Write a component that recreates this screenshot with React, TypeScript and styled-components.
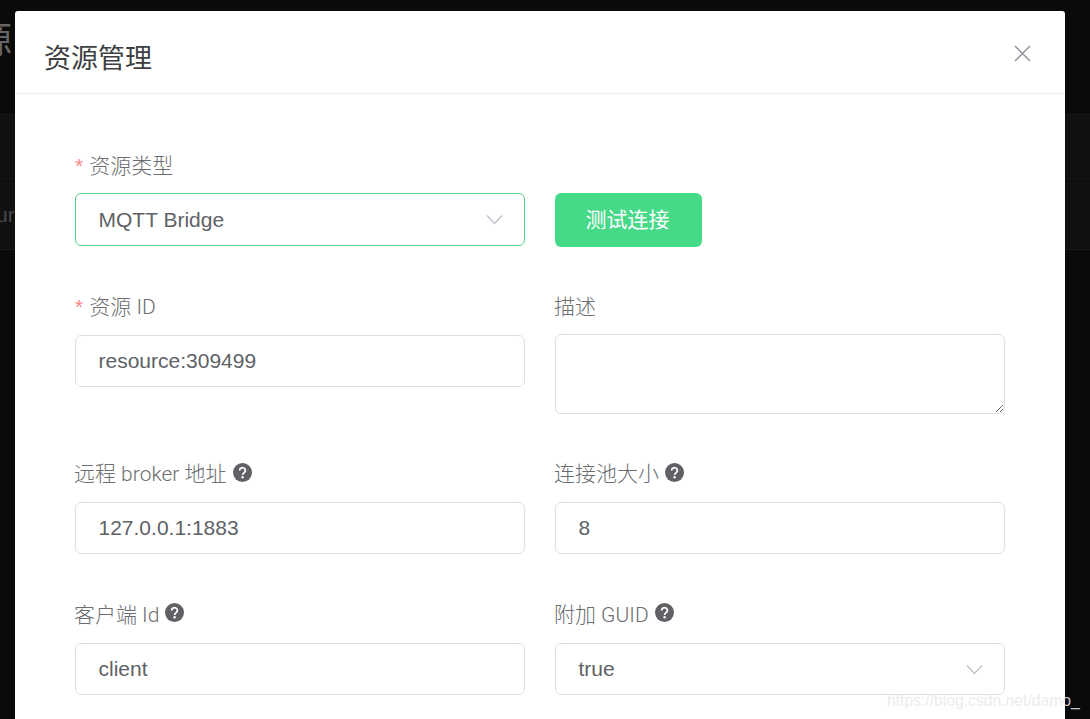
import React from 'react'
import styled, { createGlobalStyle } from 'styled-components'

const GlobalStyle = createGlobalStyle`
  html, body {
    margin: 0;
    height: 100%;
    background: #0a0a0a;
    overflow: hidden;
  }
  * {
    box-sizing: border-box;
  }
`

const FONT = `"Liberation Sans", "Noto Sans CJK SC", sans-serif`
const LABEL_FONT = `Roboto, "Noto Sans CJK SC", sans-serif`

const Page = styled.div`
  width: 1090px;
  height: 719px;
  position: relative;
  overflow: hidden;
  font-family: ${FONT};
`

const BackHeader = styled.div`
  height: 115px;
  padding-top: 16px;
  border-bottom: 1px solid #1a1a1a;
  font-size: 36px;
  line-height: 50px;
  color: #666;
  white-space: nowrap;
  margin-left: -60px;
`

const BackRow = styled.div<{ $height: number; $line: string }>`
  height: ${(p) => p.$height}px;
  background: #111;
  border-bottom: 1px solid ${(p) => p.$line};
  font-size: 21px;
  line-height: ${(p) => p.$height - 3}px;
  color: #46484c;
  white-space: nowrap;
`

const BackText = styled.span`
  display: inline-block;
  margin-left: -53px;
`

const Modal = styled.div`
  position: absolute;
  top: 11px;
  left: 15px;
  width: 1050px;
  height: 720px;
  background: #fff;
  border-radius: 3px 3px 0 0;
`

const ModalHeader = styled.div`
  height: 83px;
  padding: 5px 29px 0;
  border-bottom: 1px solid #ebeef5;
  display: flex;
  align-items: center;
  justify-content: space-between;
`

const ModalTitle = styled.span`
  margin-top: 4px;
  font-size: 27px;
  color: #3d3f42;
`

const CloseButton = styled.button`
  border: 0;
  padding: 0;
  margin-right: 5px;
  margin-top: -3px;
  background: none;
  display: flex;
  color: #909399;
`

const Form = styled.form`
  padding: 45px 60px 0;
  display: grid;
  grid-template-columns: 450px 450px;
  column-gap: 30px;
  row-gap: 33px;
`

const Field = styled.div`
  display: flex;
  flex-direction: column;
  align-items: flex-start;
`

const Label = styled.label<{ $height?: number; $required?: boolean }>`
  height: ${(p) => p.$height ?? 54}px;
  margin-left: ${(p) => (p.$required ? 0 : -1)}px;
  padding-bottom: 5px;
  display: flex;
  align-items: center;
  gap: 6px;
  font-family: ${LABEL_FONT};
  font-size: 21px;
  font-weight: 300;
  color: #6b6d71;
`

const Star = styled.span`
  margin-right: 1px;
  color: #f98a8a;
  font-family: ${FONT};
`

const HelpIcon = styled.svg`
  width: 19px;
  height: 19px;
  color: #5f6165;
`

const Input = styled.input`
  width: 450px;
  height: 52px;
  padding: 0 22px 0 22.5px;
  border: 1px solid #dcdfe6;
  border-radius: 6px;
  outline: none;
  font-family: ${FONT};
  font-size: 21px;
  color: #606266;
  background: #fff;
`

const TextArea = styled.textarea`
  width: 450px;
  height: 80px;
  padding: 8px 23px;
  border: 1px solid #dcdfe6;
  border-radius: 6px;
  outline: none;
  font-family: ${FONT};
  font-size: 21px;
  color: #606266;
  background: #fff;
`

const SelectRow = styled.div`
  display: flex;
  align-items: flex-start;
  gap: 30px;
`

const Select = styled.div<{ $focused?: boolean }>`
  width: 450px;
  height: ${(p) => (p.$focused ? 53 : 52)}px;
  padding: 0 21px 0 22.5px;
  border: 1px solid ${(p) => (p.$focused ? '#5bd08f' : '#dcdfe6')};
  border-radius: 6px;
  display: flex;
  align-items: center;
  justify-content: space-between;
  font-size: 21px;
  color: #606266;
`

const Chevron = styled.svg`
  width: 17px;
  height: 11px;
  color: #c0c4cc;
`

const TestButton = styled.button`
  width: 147px;
  height: 54px;
  padding: 0 2px 4px 0;
  border: 0;
  border-radius: 6px;
  background: #46da88;
  color: #fff;
  font-family: ${FONT};
  font-size: 21px;
`

const FullRow = styled.div`
  grid-column: 1 / -1;
`

const Watermark = styled.div`
  position: absolute;
  left: 887px;
  top: 691px;
  font-size: 15.7px;
  line-height: 20px;
  color: rgba(232, 232, 232, 0.86);
  white-space: nowrap;
`

const Arrow = () => (
  <Chevron viewBox="0 0 17 11" fill="none" stroke="currentColor" strokeWidth="1.5">
    <path d="M1 1.5 L8.5 9.5 L16 1.5" />
  </Chevron>
)

const Help = () => (
  <HelpIcon viewBox="0 0 19 19">
    <circle cx="9.5" cy="9.5" r="9.5" fill="currentColor" />
    <path
      d="M6.6 7.4 a2.9 2.7 0 1 1 4.6 2.2 c-1 .7 -1.6 1.1 -1.6 2.3"
      fill="none"
      stroke="#fff"
      strokeWidth="1.8"
    />
    <circle cx="9.6" cy="14.3" r="1.2" fill="#fff" />
  </HelpIcon>
)

export default function App() {
  return (
    <Page>
      <GlobalStyle />
      <BackHeader>资源</BackHeader>
      <BackRow $height={67} $line="#0b0b0b" />
      <BackRow $height={68} $line="#1a1a1a">
        <BackText>Resource</BackText>
      </BackRow>
      <Modal>
        <ModalHeader>
          <ModalTitle>资源管理</ModalTitle>
          <CloseButton type="button" aria-label="关闭">
            <svg width="17" height="17" viewBox="0 0 17 17" stroke="currentColor" strokeWidth="1.5" fill="none">
              <path d="M1 1 L16 16 M16 1 L1 16" />
            </svg>
          </CloseButton>
        </ModalHeader>
        <Form>
          <FullRow>
            <Field>
              <Label $required>
                <span>
                  <Star>*</Star> 资源类型
                </span>
              </Label>
              <SelectRow>
                <Select $focused>
                  MQTT Bridge
                  <Arrow />
                </Select>
                <TestButton type="button">测试连接</TestButton>
              </SelectRow>
            </Field>
          </FullRow>
          <Field>
            <Label $height={55} $required>
              <span>
                <Star>*</Star> 资源 ID
              </span>
            </Label>
            <Input defaultValue="resource:309499" />
          </Field>
          <Field>
            <Label>描述</Label>
            <TextArea />
          </Field>
          <Field>
            <Label $height={55}>
              远程 broker 地址
              <Help />
            </Label>
            <Input defaultValue="127.0.0.1:1883" />
          </Field>
          <Field>
            <Label $height={55}>
              连接池大小
              <Help />
            </Label>
            <Input defaultValue="8" />
          </Field>
          <Field>
            <Label $height={56}>
              客户端 Id
              <Help />
            </Label>
            <Input defaultValue="client" />
          </Field>
          <Field>
            <Label $height={56}>
              附加 GUID
              <Help />
            </Label>
            <Select>
              true
              <Arrow />
            </Select>
          </Field>
        </Form>
      </Modal>
      <Watermark>https://blog.csdn.net/damo_</Watermark>
    </Page>
  )
}
